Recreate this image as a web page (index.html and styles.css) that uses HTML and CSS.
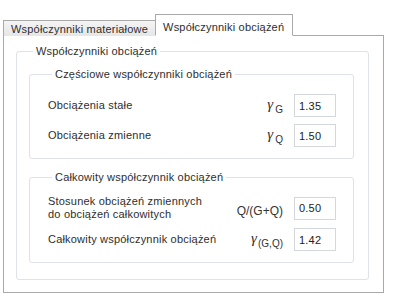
FILE: index.html
```html
<!DOCTYPE html>
<html lang="pl">
<head>
<meta charset="UTF-8" />
<title>Współczynniki obciążeń</title>
<link rel="stylesheet" href="styles.css">
</head>
<body>
<div class="dialog">
  <div class="tabs">
    <div class="tab">Współczynniki materiałowe</div>
    <div class="tab active">Współczynniki obciążeń</div>
  </div>
  <div class="panel">
    <fieldset class="group outer">
      <legend>Współczynniki obciążeń</legend>

      <fieldset class="group inner">
        <legend>Częściowe współczynniki obciążeń</legend>
        <div class="row">
          <span class="label">Obciążenia stałe</span>
          <span class="sym"><span class="gamma">γ</span><sub>G</sub></span>
          <input class="value" type="text" value="1.35">
        </div>
        <div class="row">
          <span class="label">Obciążenia zmienne</span>
          <span class="sym"><span class="gamma">γ</span><sub>Q</sub></span>
          <input class="value" type="text" value="1.50">
        </div>
      </fieldset>

      <fieldset class="group inner second">
        <legend>Całkowity współczynnik obciążeń</legend>
        <div class="row">
          <span class="label">Stosunek obciążeń zmiennych<br>do obciążeń całkowitych</span>
          <span class="sym ratio">Q/(G+Q)</span>
          <input class="value" type="text" value="0.50">
        </div>
        <div class="row">
          <span class="label">Całkowity współczynnik obciążeń</span>
          <span class="sym"><span class="gamma">γ</span><sub class="pair">(G,Q)</sub></span>
          <input class="value" type="text" value="1.42">
        </div>
      </fieldset>
    </fieldset>
  </div>
</div>
</body>
</html>
```

FILE: styles.css
```css
body {
  margin: 0;
  background: #fff;
  font-family: 'Liberation Sans', Arial, sans-serif;
  font-size: 11px;
  letter-spacing: 0.2px;
  color: #2e2e2e;
}
.dialog {
  padding: 14px 9px 0 3px;
}
.tabs {
  display: flex;
  align-items: flex-end;
  height: 22px;
  margin-bottom: -1px;
  position: relative;
  z-index: 1;
}
.tab {
  box-sizing: border-box;
  height: 16px;
  padding: 1px 7px 0 7px;
  line-height: 14px;
  border: 1px solid #a9a9a9;
  border-bottom: none;
  background: linear-gradient(#f4f4f4, #e6e6e6);
  white-space: nowrap;
}
.tab.active {
  height: 22px;
  padding: 5px 8px 0 7px;
  background: #fff;
  border-bottom: 1px solid #fff;
  margin-left: -1px;
}
.panel {
  box-sizing: border-box;
  height: 258px;
  border: 1px solid #a9a9a9;
  padding: 9px 14px 0 12px;
}
.group {
  margin: 0;
  border: 1px solid #dde3e8;
  border-radius: 3px;
  min-width: 0;
}
.group legend {
  padding: 0 3px;
  margin-left: 4px;
  line-height: 13px;
}
.outer {
  padding: 10px 14px 16px 12px;
}
.inner {
  padding: 13px 17px 11px 18px;
}
.inner.second {
  margin-top: 12px;
  padding-top: 11px;
  padding-bottom: 11px;
}
.inner .row + .row {
  margin-top: 7px;
}
.row {
  display: flex;
  align-items: center;
}
.label {
  flex: 1;
  line-height: 13px;
}
.sym {
  margin-right: 11px;
  white-space: nowrap;
  color: #333;
  letter-spacing: 0;
}
.gamma {
  font-family: 'Liberation Serif', 'Times New Roman', serif;
  font-style: italic;
  font-size: 15px;
}
.sym sub {
  font-size: 10px;
  vertical-align: -4px;
  margin-left: 2px;
}
.sym sub.pair {
  font-size: 10px;
  margin-left: 1px;
}
.ratio {
  font-size: 12px;
  margin-top: 5px;
}
.value {
  box-sizing: border-box;
  width: 42px;
  height: 23px;
  margin: 0;
  padding: 0 4px;
  border: 1px solid #d4d8dc;
  font-family: 'Liberation Sans', Arial, sans-serif;
  font-size: 11px;
  letter-spacing: 0.2px;
  color: #222;
  background: #fff;
}
```
